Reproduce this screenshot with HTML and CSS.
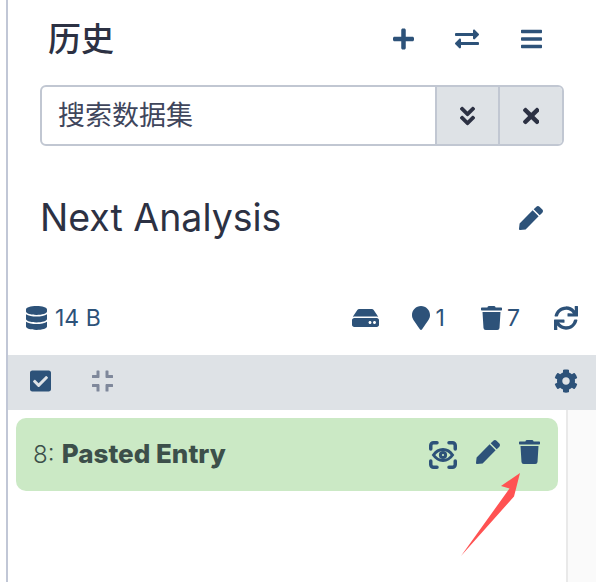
FILE: index.html
```html
<!DOCTYPE html>
<html lang="zh">
<head>
	<meta charset="UTF-8">
	<title>历史</title>
	<link rel="stylesheet" href="styles.css">
</head>
<body>
	<div class="panel">
		<div class="head">
			<h2 class="head-title">历史</h2>
			<div class="head-btns">
				<a class="head-btn"><svg class="ico" width="21" height="24" viewBox="0 0 448 512"><path d="M416 208H272V64c0-17.67-14.33-32-32-32h-32c-17.67 0-32 14.33-32 32v144H32c-17.67 0-32 14.33-32 32v32c0 17.67 14.33 32 32 32h144v144c0 17.67 14.33 32 32 32h32c17.67 0 32-14.33 32-32V304h144c17.67 0 32-14.33 32-32v-32c0-17.67-14.33-32-32-32z"/></svg></a>
				<a class="head-btn"><svg class="ico" width="24" height="24" viewBox="0 0 512 512"><path d="M0 168v-16c0-13.255 10.745-24 24-24h360V80c0-21.367 25.899-32.042 40.971-16.971l80 80c9.372 9.373 9.372 24.569 0 33.941l-80 80C409.956 271.982 384 261.456 384 240v-48H24c-13.255 0-24-10.745-24-24zm488 152H128v-48c0-21.314-25.862-32.08-40.971-16.971l-80 80c-9.372 9.373-9.372 24.569 0 33.941l80 80C102.057 463.997 128 453.437 128 432v-48h360c13.255 0 24-10.745 24-24v-16c0-13.255-10.745-24-24-24z"/></svg></a>
				<a class="head-btn"><svg class="ico" width="21" height="24" viewBox="0 0 448 512"><path d="M16 132h416c8.837 0 16-7.163 16-16V76c0-8.837-7.163-16-16-16H16C7.163 60 0 67.163 0 76v40c0 8.837 7.163 16 16 16zm0 160h416c8.837 0 16-7.163 16-16v-40c0-8.837-7.163-16-16-16H16c-8.837 0-16 7.163-16 16v40c0 8.837 7.163 16 16 16zm0 160h416c8.837 0 16-7.163 16-16v-40c0-8.837-7.163-16-16-16H16c-8.837 0-16 7.163-16 16v40c0 8.837 7.163 16 16 16z"/></svg></a>
			</div>
		</div>

		<div class="search">
			<div class="search-ipt">搜索数据集</div>
			<a class="search-btn"><svg class="ico ico-dark" width="15" height="24" viewBox="0 0 320 512"><path d="M143 256.3L7 120.3c-9.4-9.4-9.4-24.6 0-33.9l22.6-22.6c9.4-9.4 24.6-9.4 33.9 0l96.4 96.4 96.4-96.4c9.4-9.4 24.6-9.4 33.9 0L313 86.3c9.4 9.4 9.4 24.6 0 33.9l-136 136c-9.4 9.5-24.6 9.5-34 .1zm34 192l136-136c9.4-9.4 9.4-24.6 0-33.9l-22.6-22.6c-9.4-9.4-24.6-9.4-33.9 0L160 352.1l-96.4-96.4c-9.4-9.4-24.6-9.4-33.9 0L7 278.3c-9.4 9.4-9.4 24.6 0 33.9l136 136c9.4 9.5 24.6 9.5 34 .1z"/></svg></a>
			<a class="search-btn"><svg class="ico ico-dark" width="16.5" height="24" viewBox="0 0 352 512"><path d="M242.72 256l100.07-100.07c12.28-12.28 12.28-32.19 0-44.48l-22.24-22.24c-12.28-12.28-32.19-12.28-44.48 0L176 189.28 75.93 89.21c-12.28-12.28-32.19-12.28-44.48 0L9.21 111.45c-12.28 12.28-12.28 32.19 0 44.48L109.28 256 9.21 356.07c-12.28 12.28-12.28 32.19 0 44.48l22.24 22.24c12.28 12.28 32.2 12.28 44.48 0L176 322.72l100.07 100.07c12.28 12.28 32.2 12.28 44.48 0l22.24-22.24c12.28-12.28 12.28-32.19 0-44.48L242.72 256z"/></svg></a>
		</div>

		<div class="name-row">
			<div class="name">Next Analysis</div>
			<svg class="ico" width="24" height="24" viewBox="0 0 512 512"><path d="M290.74 93.24l128.02 128.02-277.99 277.99-114.14 12.6C11.35 513.54-1.56 500.62.14 485.34l12.7-114.22 277.9-277.88zm207.2-19.06l-60.11-60.11c-18.75-18.75-49.16-18.75-67.91 0l-56.55 56.55 128.02 128.02 56.55-56.55c18.75-18.76 18.75-49.16 0-67.91z"/></svg>
		</div>

		<div class="stats">
			<div class="stat stat-size">
				<svg class="ico" width="21" height="24" viewBox="0 0 448 512"><path d="M448 73.143v45.714C448 159.143 347.667 192 224 192S0 159.143 0 118.857V73.143C0 32.857 100.333 0 224 0s224 32.857 224 73.143zM448 176v102.857C448 319.143 347.667 352 224 352S0 319.143 0 278.857V176c48.125 33.143 136.208 48.572 224 48.572S399.874 209.143 448 176zm0 160v102.857C448 479.143 347.667 512 224 512S0 479.143 0 438.857V336c48.125 33.143 136.208 48.572 224 48.572S399.874 369.143 448 336z"/></svg>
				<span>14 B</span>
			</div>
			<div class="stat stat-hdd">
				<svg class="ico" width="27" height="24" viewBox="0 0 576 512"><path d="M576 304v96c0 26.51-21.49 48-48 48H48c-26.51 0-48-21.49-48-48v-96c0-26.51 21.49-48 48-48h480c26.51 0 48 21.49 48 48zm-48-80a79.557 79.557 0 0 1 30.777 6.165L462.25 85.374A48.003 48.003 0 0 0 422.311 64H153.689a48 48 0 0 0-39.938 21.374L17.223 230.165A79.557 79.557 0 0 1 48 224h480zm-48 96c-17.673 0-32 14.327-32 32s14.327 32 32 32 32-14.327 32-32-14.327-32-32-32zm-96 0c-17.673 0-32 14.327-32 32s14.327 32 32 32 32-14.327 32-32-14.327-32-32-32z"/></svg>
			</div>
			<div class="stat stat-pin">
				<svg class="ico" width="18" height="24" viewBox="0 0 384 512"><path d="M172.268 501.67C26.97 291.031 0 269.413 0 192 0 85.961 85.961 0 192 0s192 85.961 192 192c0 77.413-26.97 99.031-172.268 309.67-9.535 13.774-29.93 13.773-39.464 0z"/></svg>
				<span>1</span>
			</div>
			<div class="stat stat-del">
				<svg class="ico" width="21" height="24" viewBox="0 0 448 512"><path d="M432 32H312l-9.4-18.7A24 24 0 0 0 281.1 0H166.8a23.72 23.72 0 0 0-21.4 13.3L136 32H16A16 16 0 0 0 0 48v32a16 16 0 0 0 16 16h416a16 16 0 0 0 16-16V48a16 16 0 0 0-16-16zM53.2 467a48 48 0 0 0 47.9 45h245.8a48 48 0 0 0 47.9-45L416 128H32z"/></svg>
				<span>7</span>
			</div>
			<div class="stat stat-sync">
				<svg class="ico" width="24" height="24" viewBox="0 0 512 512"><path d="M440.65 12.57l4 82.77A247.16 247.16 0 0 0 255.83 8C134.73 8 33.91 94.92 12.29 209.82A12 12 0 0 0 24.09 224h49.05a12 12 0 0 0 11.67-9.26 175.91 175.91 0 0 1 317-56.94l-101.46-4.86a12 12 0 0 0-12.57 12v47.41a12 12 0 0 0 12 12H500a12 12 0 0 0 12-12V12a12 12 0 0 0-12-12h-47.37a12 12 0 0 0-11.98 12.57zM255.83 432a175.61 175.61 0 0 1-146-77.8l101.8 4.87a12 12 0 0 0 12.57-12v-47.4a12 12 0 0 0-12-12H12a12 12 0 0 0-12 12V500a12 12 0 0 0 12 12h47.35a12 12 0 0 0 12-12.6l-4.15-82.57A247.17 247.17 0 0 0 255.83 504c121.11 0 221.93-86.92 243.55-201.82a12 12 0 0 0-11.8-14.18h-49.05a12 12 0 0 0-11.67 9.26A175.86 175.86 0 0 1 255.83 432z"/></svg>
			</div>
		</div>

		<div class="tools">
			<svg class="ico" width="21" height="24" viewBox="0 0 448 512"><path d="M400 480H48c-26.51 0-48-21.49-48-48V80c0-26.51 21.49-48 48-48h352c26.51 0 48 21.49 48 48v352c0 26.51-21.49 48-48 48zm-204.686-98.059l184-184c6.248-6.248 6.248-16.379 0-22.627l-22.627-22.627c-6.248-6.248-16.379-6.249-22.628 0L184 302.745l-70.059-70.059c-6.248-6.248-16.379-6.248-22.628 0l-22.627 22.627c-6.248 6.248-6.248 16.379 0 22.627l104 104c6.249 6.25 16.379 6.25 22.628.001z"/></svg>
			<svg class="ico ico-off" width="21" height="24" viewBox="0 0 448 512"><path d="M436 192H312c-13.3 0-24-10.7-24-24V44c0-6.6 5.4-12 12-12h40c6.6 0 12 5.4 12 12v84h84c6.6 0 12 5.4 12 12v40c0 6.6-5.4 12-12 12zm-276-24V44c0-6.6-5.4-12-12-12h-40c-6.6 0-12 5.4-12 12v84H12c-6.6 0-12 5.4-12 12v40c0 6.6 5.4 12 12 12h124c13.3 0 24-10.7 24-24zm0 300V344c0-13.3-10.7-24-24-24H12c-6.6 0-12 5.4-12 12v40c0 6.6 5.4 12 12 12h84v84c0 6.6 5.4 12 12 12h40c6.6 0 12-5.4 12-12zm192 0v-84h84c6.6 0 12-5.4 12-12v-40c0-6.6-5.4-12-12-12H312c-13.3 0-24 10.7-24 24v124c0 6.6 5.4 12 12 12h40c6.6 0 12-5.4 12-12z"/></svg>
			<svg class="ico tools-cog" width="24" height="24" viewBox="0 0 512 512"><path d="M487.4 315.7l-42.6-24.6c4.3-23.2 4.3-47 0-70.2l42.6-24.6c4.9-2.8 7.1-8.6 5.5-14-11.1-35.6-30-67.8-54.7-94.6-3.8-4.1-10-5.1-14.8-2.3L380.8 110c-17.9-15.4-38.5-27.3-60.8-35.1V25.8c0-5.6-3.9-10.5-9.4-11.7-36.7-8.2-74.3-7.8-109.2 0-5.5 1.2-9.4 6.1-9.4 11.7V75c-22.2 7.9-42.8 19.8-60.8 35.1L88.7 85.5c-4.9-2.8-11-1.9-14.8 2.3-24.7 26.7-43.6 58.9-54.7 94.6-1.7 5.4.6 11.2 5.5 14L67.3 221c-4.3 23.2-4.3 47 0 70.2l-42.6 24.6c-4.9 2.8-7.1 8.6-5.5 14 11.1 35.6 30 67.8 54.7 94.6 3.8 4.1 10 5.1 14.8 2.3l42.6-24.6c17.9 15.4 38.5 27.3 60.8 35.1v49.2c0 5.6 3.9 10.5 9.4 11.7 36.7 8.2 74.3 7.8 109.2 0 5.5-1.2 9.4-6.1 9.4-11.7v-49.2c22.2-7.9 42.8-19.8 60.8-35.1l42.6 24.6c4.9 2.8 11 1.9 14.8-2.3 24.7-26.7 43.6-58.9 54.7-94.6 1.5-5.5-.7-11.3-5.6-14.1zM256 336c-44.1 0-80-35.9-80-80s35.9-80 80-80 80 35.9 80 80-35.9 80-80 80z"/></svg>
		</div>

		<div class="list">
			<div class="list-main">
				<div class="item">
					<div class="item-name"><span class="item-num">8:</span> <b>Pasted Entry</b></div>
					<div class="item-btns">
						<svg class="ico-scan" width="28" height="28" viewBox="0 0 28 28">
							<path class="scan-line" d="M1.750 8V4.500a2.750 2.750 0 0 1 2.750-2.750H8M20 1.750h3.500a2.750 2.750 0 0 1 2.750 2.750V8M26.250 20v3.500a2.750 2.750 0 0 1-2.750 2.750H20M8 26.250H4.500a2.750 2.750 0 0 1-2.750-2.750V20"/>
							<path class="scan-eye" d="M4.500 14C7 10.300 10.200 8.500 14 8.500S21 10.300 23.500 14C21 17.700 17.800 19.500 14 19.500S7 17.700 4.500 14Z"/>
							<circle class="scan-pupil" cx="14" cy="14" r="2.600"/>
						</svg>
						<svg class="ico" width="24" height="24" viewBox="0 0 512 512"><path d="M290.74 93.24l128.02 128.02-277.99 277.99-114.14 12.6C11.35 513.54-1.56 500.62.14 485.34l12.7-114.22 277.9-277.88zm207.2-19.06l-60.11-60.11c-18.75-18.75-49.16-18.75-67.91 0l-56.55 56.55 128.02 128.02 56.55-56.55c18.75-18.76 18.75-49.16 0-67.91z"/></svg>
						<svg class="ico" width="21" height="24" viewBox="0 0 448 512"><path d="M432 32H312l-9.4-18.7A24 24 0 0 0 281.1 0H166.8a23.72 23.72 0 0 0-21.4 13.3L136 32H16A16 16 0 0 0 0 48v32a16 16 0 0 0 16 16h416a16 16 0 0 0 16-16V48a16 16 0 0 0-16-16zM53.2 467a48 48 0 0 0 47.9 45h245.8a48 48 0 0 0 47.9-45L416 128H32z"/></svg>
					</div>
				</div>
			</div>
			<div class="list-track"></div>
		</div>
	</div>

	<!-- annotation arrow drawn over the screenshot -->
	<svg class="arrow" width="596" height="582" viewBox="0 0 596 582">
		<path d="M520 473L501 486L509.500 488.500L461 556L514 496.500Z"/>
	</svg>
</body>
</html>
```

FILE: styles.css
```css
*{margin:0;padding:0;box-sizing:border-box;}
html,body{height:100%;overflow:hidden;background:#fff;}
body{font-family:"Inter","Noto Sans CJK SC",sans-serif;color:#2c3143;}
.ico{fill:#2d5279;display:block;flex:none;}
.ico-dark{fill:#2c3143;}
.ico-off{fill:#7f889b;}

.panel{margin-left:6px;height:582px;border-left:2px solid #c1c7d6;display:flex;flex-direction:column;}

.head{height:78px;display:flex;align-items:center;justify-content:space-between;padding:0 33px 0 40px;}
.head-title{font-size:33px;font-weight:500;line-height:40px;}
.head-btns{display:flex;}
.head-btn{width:64px;height:40px;display:flex;align-items:center;justify-content:center;}

.search{height:61px;margin:7px 32px 0;display:flex;border:2px solid #c1c7d2;border-radius:6px;overflow:hidden;}
.search-ipt{flex:1;padding-left:16px;font-size:27px;line-height:57px;color:#3f465c;}
.search-btn{width:63px;background:#dee2e6;border-left:2px solid #c1c7d2;display:flex;align-items:center;justify-content:center;}
.search-btn:last-child{width:64px;}

.name-row{height:92px;margin-top:26px;padding:0 53px 0 32px;display:flex;align-items:center;justify-content:space-between;}
.name{font-size:37.500px;line-height:44px;}

.stats{height:30px;margin-top:39px;display:flex;align-items:center;font-size:23px;color:#2d5279;padding:0 18px;}
.stat{display:flex;align-items:center;}
.stat-size{gap:8px;margin-right:auto;}
.stat-pin{gap:6px;margin-left:33px;}
.stat-del{gap:5px;margin-left:36px;}
.stat-sync{margin-left:34px;}

.tools{height:55px;margin-top:22px;padding:0 18px 4px 22px;background:#dee2e6;display:flex;align-items:center;}
.tools .ico-off{margin-left:41px;}
.tools-cog{margin-left:auto;}

.list{flex:1;display:flex;}
.list-main{flex:1;padding:8px 8px 0;}
.list-track{width:30px;background:#fafafa;border-left:2px solid #e9e9e9;}

.item{height:73px;background:#cbe9c5;border-radius:10px;display:flex;align-items:center;justify-content:space-between;padding:0 18px 2px 17px;}
.item-name{font-size:26px;color:#3c4f4a;}
.item-num{font-size:24px;font-weight:300;}
.item-name b{font-weight:800;}
.item-btns{display:flex;align-items:center;gap:19px;margin-bottom:3px;}
.ico-scan{display:block;flex:none;margin-top:6px;}
.scan-line{fill:none;stroke:#2d5279;stroke-width:3.500;stroke-linecap:round;}
.scan-eye{fill:none;stroke:#2d5279;stroke-width:3;}
.scan-pupil{fill:#cbe9c5;stroke:#2d5279;stroke-width:3;}

.arrow{position:absolute;left:0;top:0;pointer-events:none;}
.arrow path{fill:#ff5252;}
```
